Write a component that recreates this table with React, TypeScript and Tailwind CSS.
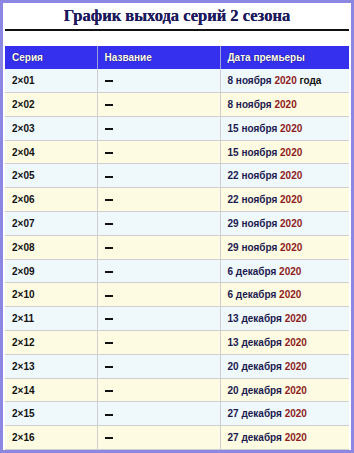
const rows: [string, string, string][] = [
  ['2×01', '8 ноября', ' года'],
  ['2×02', '8 ноября', ''],
  ['2×03', '15 ноября', ''],
  ['2×04', '15 ноября', ''],
  ['2×05', '22 ноября', ''],
  ['2×06', '22 ноября', ''],
  ['2×07', '29 ноября', ''],
  ['2×08', '29 ноября', ''],
  ['2×09', '6 декабря', ''],
  ['2×10', '6 декабря', ''],
  ['2×11', '13 декабря', ''],
  ['2×12', '13 декабря', ''],
  ['2×13', '20 декабря', ''],
  ['2×14', '20 декабря', ''],
  ['2×15', '27 декабря', ''],
  ['2×16', '27 декабря', ''],
];

export default function App() {
  return (
    <div className="w-[354px] h-[453px] bg-[#8b87e2] p-[3px] overflow-hidden">
      <div className="h-full bg-white flex flex-col px-[2px]">
        <h1 className="h-[29px] flex items-center justify-center border-b-2 border-[#111] text-[16.5px] font-bold text-[#1d1a5c] [font-family:'Liberation_Serif',serif] [text-shadow:0_0_0.4px_#1d1a5c]">
          График выхода серий 2 сезона
        </h1>
        <div className="h-[15px]" />
        <table className="w-full border-collapse text-[10px] font-bold [font-family:'Liberation_Sans',sans-serif]">
          <thead>
            <tr className="h-[23px] bg-[#3530ee] text-white [text-shadow:0_0_1px_#000]">
              <th className="w-[92px] text-left pl-[7px] border-r border-[#9aa0d8]">Серия</th>
              <th className="w-[123px] text-left pl-[7px] border-r border-[#9aa0d8]">Название</th>
              <th className="text-left pl-[7px]">Дата премьеры</th>
            </tr>
          </thead>
          <tbody>
            {rows.map(([ep, date, tail], i) => (
              <tr
                key={ep}
                className={`h-[23.8px] border-b border-[#cfcfcf] ${i % 2 === 0 ? 'bg-[#eff8fb]' : 'bg-[#fdfbe1]'}`}
              >
                <td className="pl-[7px] text-[#111] border-r border-[#cfcfcf]">{ep}</td>
                <td className="pl-[7px] text-[#111] border-r border-[#cfcfcf]">
                  <span className="inline-block w-[8px] h-[2px] bg-[#111] align-middle" />
                </td>
                <td className="pl-[7px] text-[#1b1a50]">
                  {date} <span className="text-[#8e1c1c]">2020</span>
                  {tail && <span className="text-[#111]">{tail}</span>}
                </td>
              </tr>
            ))}
          </tbody>
        </table>
      </div>
    </div>
  );
}
